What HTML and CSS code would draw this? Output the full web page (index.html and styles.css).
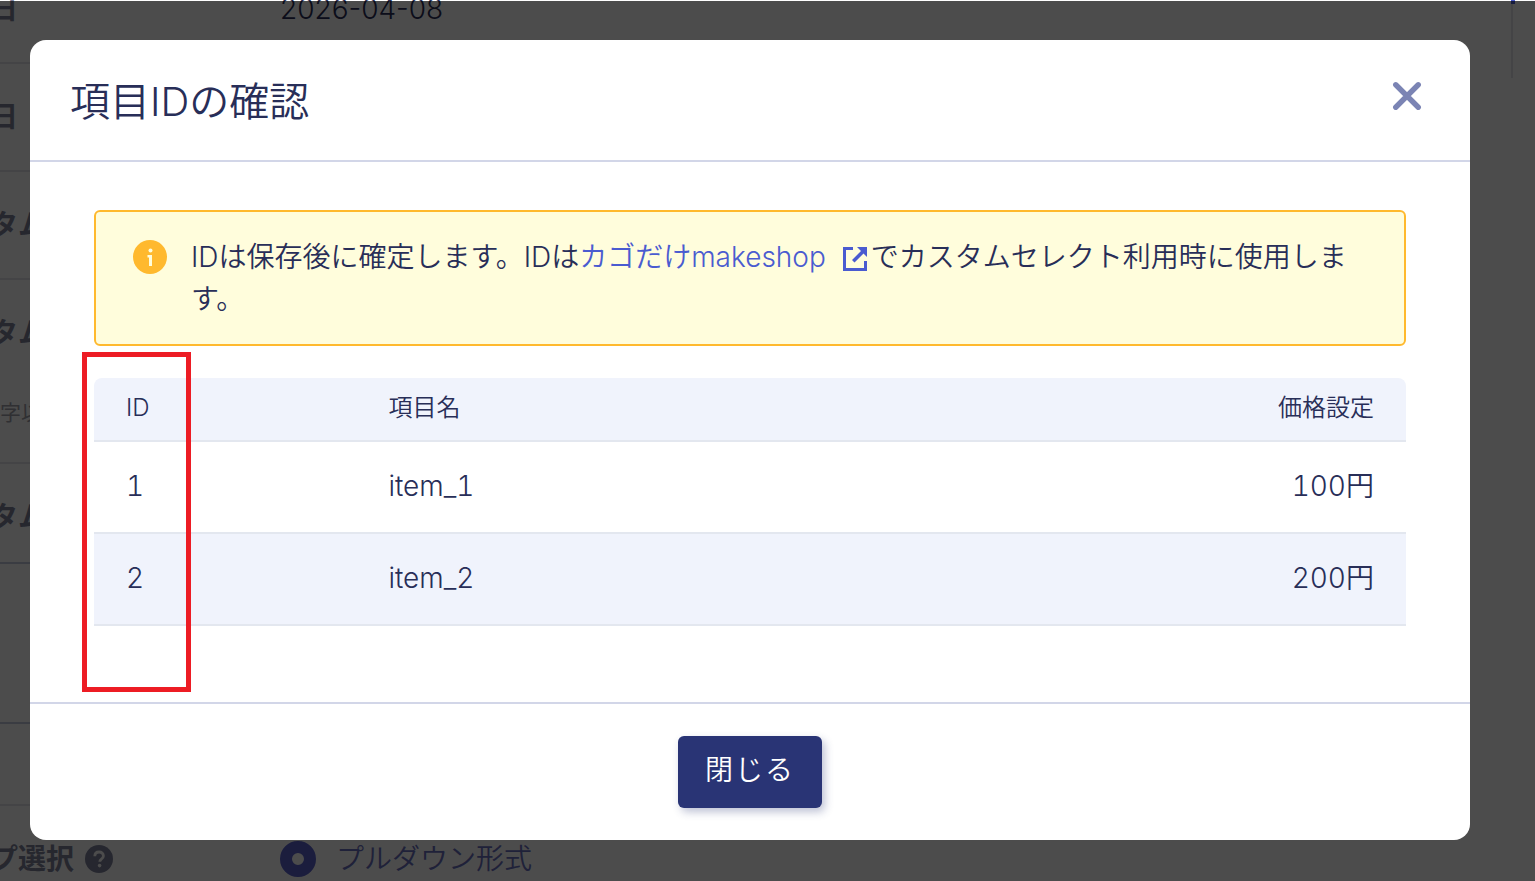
FILE: index.html
```html
<!DOCTYPE html>
<html lang="ja">
<head>
  <meta charset="UTF-8">
  <meta name="viewport" content="width=device-width, initial-scale=1.0">
  <title>項目IDの確認</title>
  <link rel="stylesheet" href="styles.css">
</head>
<body>
  <main class="page">
    <div class="form-list">
      <div class="form-row">
        <div class="form-label">日</div>
        <div class="form-value">2026-04-08</div>
      </div>
      <div class="form-row">
        <div class="form-label">日</div>
      </div>
      <div class="form-row">
        <div class="form-label">タム</div>
      </div>
      <div class="form-row form-row-tall">
        <div class="form-label">タム <small class="form-hint">字以</small></div>
      </div>
      <div class="form-row form-row-short">
        <div class="form-label">タム</div>
      </div>
      <div class="form-row form-row-group"></div>
      <div class="form-row form-row-head"></div>
      <div class="form-row">
        <div class="form-label">
          プ選択
          <svg class="help-icon" viewBox="0 0 28 28" aria-hidden="true">
            <circle cx="14" cy="14" r="14" fill="#80849e"/>
            <path d="M9.8 11.2C9.8 8.6 11.6 7 14.1 7s4.3 1.6 4.3 3.9c0 3-3.6 3.2-3.6 5.8" fill="none" stroke="#fff" stroke-width="2.8"/>
            <circle cx="14.6" cy="20.6" r="1.8" fill="#fff"/>
          </svg>
        </div>
        <label class="form-value radio">
          <input type="radio" name="format" checked>
          プルダウン形式
        </label>
      </div>
    </div>
    <div class="side-line"></div>
  </main>

  <div class="overlay">
    <section class="modal" role="dialog" aria-labelledby="modal-title">
      <header class="modal-header">
        <h1 id="modal-title">項目IDの確認</h1>
        <button type="button" class="close-button" aria-label="閉じる">
          <svg viewBox="0 0 28 28" aria-hidden="true">
            <path d="M3.500 3.500L24.500 24.500M24.500 3.500L3.500 24.500" fill="none" stroke="#7b84b4" stroke-width="5" stroke-linecap="round"/>
          </svg>
        </button>
      </header>

      <div class="modal-body">
        <div class="notice">
          <svg class="notice-icon" viewBox="0 0 34 34" aria-hidden="true">
            <circle cx="17" cy="17" r="17" fill="#ffb92e"/>
            <circle cx="17.500" cy="10.500" r="2" fill="#fffddc"/>
            <path d="M14.500 15H19V26H16V17.500H14.500Z" fill="#fffddc"/>
          </svg>
          <p>IDは保存後に確定します。IDは<a href="#">カゴだけmakeshop<svg class="link-icon" viewBox="0 0 26 26" aria-hidden="true">
            <path d="M11 2.500H2.500V23.500H23.500V15" fill="none" stroke="#4a5bd0" stroke-width="3"/>
            <path d="M15 1H25V11L21.500 7.500L12.500 16.500L10 14L19 5Z" fill="#4a5bd0"/>
          </svg></a>でカスタムセレクト利用時に使用します。</p>
        </div>

        <div class="table-wrapper">
          <table class="item-table">
            <thead>
              <tr>
                <th class="col-id" scope="col">ID</th>
                <th scope="col">項目名</th>
                <th class="col-price" scope="col">価格設定</th>
              </tr>
            </thead>
            <tbody>
              <tr>
                <td>1</td>
                <td>item_1</td>
                <td class="col-price">100円</td>
              </tr>
              <tr>
                <td>2</td>
                <td>item_2</td>
                <td class="col-price">200円</td>
              </tr>
            </tbody>
          </table>
          <div class="highlight"></div>
        </div>
      </div>

      <footer class="modal-footer">
        <button type="button" class="primary-button">閉じる</button>
      </footer>
    </section>
  </div>
</body>
</html>
```
FILE: styles.css
```css
* {
  box-sizing: border-box;
}
body {
  margin: 0;
  overflow: hidden;
  color: #282e58;
  background-color: #fff;
  font-family: Inter, 'Noto Sans CJK JP', sans-serif;
  font-size: 28px;
  font-weight: 350;
  line-height: 42px;
}
button {
  font: inherit;
  cursor: pointer;
}

/**
 * Page behind the dialog, scrolled part of the way.
 */
.page {
  position: relative;
  height: 100vh;
  overflow: hidden;
}
.form-list {
  width: 90%;
  margin-top: -44px;
  margin-left: -10px;
}
.form-row {
  display: flex;
  min-height: 108px;
  padding-top: 32px;
  border-bottom: 2px solid #e4e4ea;
}
.form-row-tall {
  min-height: 184px;
}
.form-row-short {
  min-height: 100px;
  border-color: #c4c8dc;
}
.form-row-group {
  min-height: 160px;
  border-color: #c4c8dc;
}
.form-row-head {
  min-height: 82px;
}
.form-label {
  width: 290px;
  color: #80839c;
  font-size: 28px;
  font-weight: 700;
}
.form-hint {
  display: block;
  margin-top: 38px;
  margin-left: 10px;
  color: #a0a0aa;
  font-size: 21px;
  font-weight: 400;
}
.help-icon {
  width: 28px;
  margin-left: 4px;
  vertical-align: -4px;
}
.radio {
  display: flex;
  align-items: center;
  height: 42px;
  gap: 20px;
  color: #6a70c0;
}
.radio input {
  appearance: none;
  width: 36px;
  height: 36px;
  margin: 0;
  border: 12px solid #5a62cc;
  border-radius: 50%;
}
.side-line {
  position: absolute;
  top: 0;
  right: 20px;
  height: 78px;
  border-left: 2px solid #e4e4ea;
}
.side-line::before {
  content: '';
  display: block;
  width: 4px;
  height: 4px;
  margin-left: -2px;
  background-color: #4a5bd0;
}

/**
 * Dialog.
 */
.overlay {
  position: fixed;
  top: 1px;
  right: 0;
  bottom: 0;
  left: 0;
  padding: 39px 65px 0 30px;
  background-color: rgba(0, 0, 0, 0.7);
}
.modal {
  background-color: #fff;
  border-radius: 16px;
}
.modal-header {
  display: flex;
  justify-content: space-between;
  align-items: center;
  padding: 32px 48px 28px 40px;
  border-bottom: 2px solid #d2d6e8;
}
.modal-header h1 {
  margin: 0;
  font-size: 40px;
  font-weight: 350;
  line-height: 60px;
}
.close-button {
  display: flex;
  padding: 0 0 12px;
  border: none;
  background: none;
}
.close-button svg {
  width: 30px;
}
.modal-body {
  padding: 48px 64px 76px;
}

/**
 * Notice.
 */
.notice {
  display: flex;
  gap: 24px;
  padding: 24px 32px 24px 37px;
  border: 2px solid #ffb92e;
  border-radius: 6px;
  background-color: #fffddc;
}
.notice-icon {
  flex: none;
  width: 34px;
  height: 42px;
}
.notice p {
  margin: 0;
}
.notice a {
  color: #4a5bd0;
  text-decoration: none;
}
.link-icon {
  width: 26px;
  margin: 0 3px 0 16px;
  vertical-align: -5px;
}

/**
 * Item table.
 */
.table-wrapper {
  position: relative;
  margin-top: 32px;
}
.item-table {
  width: 100%;
  border-collapse: separate;
  border-spacing: 0;
  font-variant-numeric: tabular-nums;
}
.item-table th,
.item-table td {
  height: 92px;
  padding: 0 32px 2px;
  text-align: left;
  font-weight: 350;
  border-bottom: 2px solid #e3e7ef;
}
.item-table th {
  height: 64px;
  font-size: 24px;
  background-color: #f0f3fc;
}
.item-table th:first-child {
  border-top-left-radius: 8px;
}
.item-table th:last-child {
  border-top-right-radius: 8px;
}
.item-table tbody tr:nth-child(even) {
  background-color: #f0f3fc;
}
.item-table .col-id {
  width: 20%;
}
.item-table .col-price {
  text-align: right;
}
.highlight {
  position: absolute;
  top: -26px;
  left: -12px;
  width: 109px;
  height: 340px;
  border: 5px solid #ed1c24;
  pointer-events: none;
}

.modal-footer {
  padding: 32px 0;
  text-align: center;
  border-top: 2px solid #d2d6e8;
}
.primary-button {
  display: inline-block;
  height: 72px;
  padding: 0 27px 4px;
  color: #fff;
  letter-spacing: 2px;
  border: none;
  border-radius: 6px;
  background-color: #293475;
  box-shadow: 3px 4px 8px rgba(41, 52, 117, 0.3);
}
```
